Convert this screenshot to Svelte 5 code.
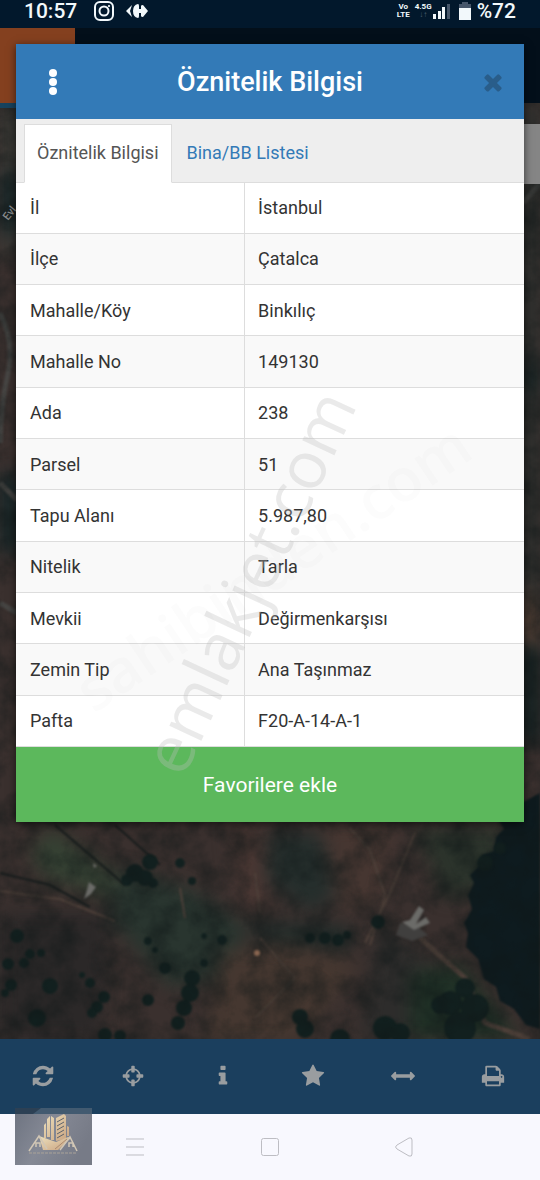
<script lang="ts">
	const title = 'Öznitelik Bilgisi';
	const tabs = ['Öznitelik Bilgisi', 'Bina/BB Listesi'];
	let activeTab = $state(0);
	let open = $state(true);

	const rows = [
		['İl', 'İstanbul'],
		['İlçe', 'Çatalca'],
		['Mahalle/Köy', 'Binkılıç'],
		['Mahalle No', '149130'],
		['Ada', '238'],
		['Parsel', '51'],
		['Tapu Alanı', '5.987,80'],
		['Nitelik', 'Tarla'],
		['Mevkii', 'Değirmenkarşısı'],
		['Zemin Tip', 'Ana Taşınmaz'],
		['Pafta', 'F20-A-14-A-1']
	];

	const tools = [
		{
			label: 'Yenile',
			path: 'M1639 1056q0 5-1 7-64 268-268 434.5t-478 166.5q-146 0-282.5-55t-243.5-157l-129 129q-19 19-45 19t-45-19-19-45v-448q0-26 19-45t45-19h448q26 0 45 19t19 45-19 45l-137 137q71 66 161 102t187 36q134 0 250-65t186-179q11-17 53-117 8-23 30-23h192q13 0 22.5 9.5t9.5 22.5zm25-800v448q0 26-19 45t-45 19h-448q-26 0-45-19t-19-45 19-45l138-138q-148-137-349-137-134 0-250 65t-186 179q-11 17-53 117-8 23-30 23h-199q-13 0-22.5-9.5t-9.5-22.5v-7q65-268 270-434.5t480-166.5q146 0 284 55.5t245 156.5l130-129q19-19 45-19t45 19 19 45z'
		},
		{
			label: 'Konum',
			path: 'M1325 1024h-109q-26 0-45-19t-19-45v-128q0-26 19-45t45-19h109q-32-108-112.5-188.5t-188.5-112.5v109q0 26-19 45t-45 19h-128q-26 0-45-19t-19-45v-109q-108 32-188.5 112.5t-112.5 188.5h109q26 0 45 19t19 45v128q0 26-19 45t-45 19h-109q32 108 112.5 188.5t188.5 112.5v-109q0-26 19-45t45-19h128q26 0 45 19t19 45v109q108-32 188.5-112.5t112.5-188.5zm339-192v128q0 26-19 45t-45 19h-143q-37 161-154.5 278.5t-278.5 154.5v143q0 26-19 45t-45 19h-128q-26 0-45-19t-19-45v-143q-161-37-278.5-154.5t-154.5-278.5h-143q-26 0-45-19t-19-45v-128q0-26 19-45t45-19h143q37-161 154.5-278.5t278.5-154.5v-143q0-26 19-45t45-19h128q26 0 45 19t19 45v143q161 37 278.5 154.5t154.5 278.5h143q26 0 45 19t19 45z'
		},
		{
			label: 'Bilgi',
			path: 'M1216 1344v128q0 26-19 45t-45 19h-512q-26 0-45-19t-19-45v-128q0-26 19-45t45-19h64v-384h-64q-26 0-45-19t-19-45v-128q0-26 19-45t45-19h384q26 0 45 19t19 45v576h64q26 0 45 19t19 45zm-128-1152v192q0 26-19 45t-45 19h-256q-26 0-45-19t-19-45v-192q0-26 19-45t45-19h256q26 0 45 19t19 45z'
		},
		{
			label: 'Favoriler',
			path: 'M1728 647q0 22-26 48l-363 354 86 500q1 7 1 20 0 21-10.5 35.5t-30.5 14.5q-19 0-40-12l-449-236-449 236q-22 12-40 12-21 0-31.5-14.5t-10.5-35.5q0-6 2-20l86-500-364-354q-25-27-25-48 0-37 56-46l502-73 225-455q19-41 49-41t49 41l225 455 502 73q56 9 56 46z'
		},
		{
			label: 'Ölç',
			path: 'M1792 896q0 26-19 45l-256 256q-19 19-45 19t-45-19-19-45v-128h-1024v128q0 26-19 45t-45 19-45-19l-256-256q-19-19-19-45t19-45l256-256q19-19 45-19t45 19 19 45v128h1024v-128q0-26 19-45t45-19 45 19l256 256q19 19 19 45z'
		},
		{
			label: 'Yazdır',
			path: 'M448 1536h896v-256h-896v256zm0-640h896v-384h-160q-40 0-68-28t-28-68v-160h-640v640zm1152 64q0-26-19-45t-45-19-45 19-19 45 19 45 45 19 45-19 19-45zm128 0v416q0 13-9.5 22.5t-22.5 9.5h-224v160q0 40-28 68t-68 28h-960q-40 0-68-28t-28-68v-160h-224q-13 0-22.5-9.5t-9.5-22.5v-416q0-79 56.5-135.5t135.5-56.5h64v-544q0-40 28-68t68-28h672q40 0 88 20t76 48l152 152q28 28 48 76t20 88v256h64q79 0 135.5 56.5t56.5 135.5z'
		}
	];

	// tree crowns on the map: x, y, radius
	const trees = [
		[17, 833, 7], [50, 883, 8], [37, 915, 9], [148, 897, 6], [30, 851, 5], [24, 860, 5], [8, 861, 6], [11, 882, 6],
		[5, 890, 4], [41, 850, 4], [90, 880, 5], [82, 872, 3], [104, 894, 6], [97, 904, 6], [92, 910, 5], [148, 838, 4],
		[155, 847, 3], [204, 833, 3], [222, 837, 5], [204, 860, 4], [165, 865, 6], [180, 760, 5], [192, 778, 4],
		[150, 759, 8], [135, 770, 9], [145, 775, 8], [153, 780, 5], [127, 777, 6], [192, 875, 8], [190, 890, 9],
		[184, 905, 8], [178, 920, 7], [300, 914, 8], [305, 926, 9], [105, 932, 7], [120, 933, 6], [378, 819, 7],
		[310, 835, 5], [325, 835, 6], [338, 837, 6], [347, 832, 4], [385, 925, 12], [400, 930, 10], [340, 936, 10],
		[465, 885, 10], [450, 900, 12], [440, 902, 9], [475, 905, 14], [460, 925, 16], [500, 745, 6], [485, 760, 8]
	];
</script>

<div class="screen">
	<header class="status">
		<span class="clock">10:57</span>
		<svg class="status-app" viewBox="0 0 20 20" aria-hidden="true">
			<rect x="1" y="1" width="18" height="18" rx="5" />
			<circle cx="10" cy="10" r="4.5" />
			<circle class="solid" cx="15" cy="5" r="0.7" />
		</svg>
		<svg class="carrefour" viewBox="0 0 22 16" aria-hidden="true">
			<path d="M6 2 0 8l6 6-2-6zM12 1Q7 2 7 8t5 7q1 0 1-2v-3h2v3q0 1 2 1l5-6-5-6q-2 0-2 1v3h-2V3q0-2-1-2z" />
		</svg>
		<span class="spacer"></span>
		<span class="volte"><span>Vo</span><span>LTE</span></span>
		<span class="network">4.5G<span class="arrows">↓↑</span></span>
		<svg class="signal" viewBox="0 0 17 16" aria-hidden="true">
			<path d="M0 11h3v5H0zM5 8h3v8H5zM9 4h3v12H9z" />
			<path class="dim" d="M14 1h3v15h-3z" />
		</svg>
		<svg class="battery" viewBox="0 0 12 18" aria-hidden="true">
			<path class="dim" d="M3 0h6v2h3v4H0V2h3z" />
			<path d="M0 6h12v12H0z" />
		</svg>
		<span class="percent">%72</span>
	</header>

	<div class="app">
		<div class="page">
			<div class="app-bar"><div class="brand"></div></div>
			<div class="map">
				<svg viewBox="0 0 540 936" preserveAspectRatio="xMidYMax slice" aria-hidden="true">
					<defs>
						<filter id="soft" x="-20%" y="-20%" width="140%" height="140%" color-interpolation-filters="sRGB"><feGaussianBlur stdDeviation="9" /></filter>
						<filter id="edge" color-interpolation-filters="sRGB"><feGaussianBlur stdDeviation="1" /></filter>
						<filter id="ground" x="0" y="0" width="100%" height="100%" color-interpolation-filters="sRGB">
							<feTurbulence type="fractalNoise" baseFrequency="0.04" numOctaves="5" seed="8" />
							<feColorMatrix values="0 0 0 0 0.06  0 0 0 0 0.09  0 0 0 0 0.09  1.8 0 0 0 -0.6" />
						</filter>
					</defs>
					<rect width="540" height="936" fill="#3a302e" />
					<g filter="url(#soft)">
						<path d="M0 0h20v150H0z" fill="#3b3b37" />
						<path d="M0 70h20v60H0zM0 370h20v80H0z" fill="#16282a" />
						<path d="M520 0h20v640h-20z" fill="#2c2f2d" />
						<path d="M520 260h20v30h-20zM520 520h20v120h-20z" fill="#122122" />
						<path d="M520 480l20 25v35h-20z" fill="#594337" />
						<path d="M50 725l65 45 10 30-80-25-15-25z" fill="#354133" />
						<path d="M0 810h110l-10 126H0z" fill="#2b2828" />
						<path d="M120 765l70 20 60 40-30 50-50 10-60-70z" fill="#29352f" />
						<path d="M270 730h50l20 60-30 20-45-35z" fill="#252e2c" />
						<path d="M320 720h80l-20 80-40 10z" fill="#463631" />
						<path d="M220 850l70-10 70 20-60 80h-95z" fill="#453730" />
						<path d="M230 720h30l10 90h-30z" fill="#4a3733" />
						<path d="M380 820l80 60-10 56h-90z" fill="#2d2c2b" />
						<path d="M415 725h90v60l-60 10z" fill="#2b332b" />
						<path d="M410 870l50-10 60 76H410z" fill="#213227" />
						<path d="M250 820l100 5v20l-90-10z" fill="#1c2a28" />
					</g>
					<path filter="url(#edge)" fill="#0e1b1f" d="M540 690v236l-14-4-12-16-14-8-4-14-12-8-6-20-12-12 2-14-4-10 8-14-4-14 6-12-4-8 10-10 2-10 12-4 2-14 8-8-6-10 8-8z" />
					<g class="roads" filter="url(#edge)">
						<path d="M0 788l60 8 55 22" />
						<path d="M0 770l50 12 40 22M55 722l70 60M115 722l45 40" class="dark" />
						<path d="M350 725l20 22 15 45-15 50M415 730l-25 60-25 50" />
						<path d="M255 770l5 40M180 785l5 30M260 835l35 40-40 40" />
						<path class="wide" d="M420 835l45 40 20 45 45 16" />
						<path class="wide grey" d="M0 210q15 30 8 60T0 340M0 380l17 17M0 500l17 10" />
						<path class="wide grey" d="M523 100l17-20" />
					</g>
					<g fill="#12201f" filter="url(#edge)">
						{#each trees as [x, y, r]}
							<circle cx={x} cy={y} {r} />
						{/each}
					</g>
					<rect width="540" height="936" filter="url(#ground)" opacity="0.55" />
					<g fill="#6b6b68" filter="url(#edge)">
						<path d="M400 820l18 4 10 8-16 6-16-6z" fill="#403f3e" />
						<path d="M89 779l7 5-5 7-7 5 3-9zM93 760l4 3-3 2zM419 803l5 4-8 14 10-7 4 6-16 7-12-8 8-2z" />
						<circle cx="257" cy="850" r="3" fill="#8a6650" />
					</g>
					<rect x="520" y="21" width="20" height="60" fill="#858585" />
					<rect width="16" height="5" fill="#17435e" />
					<text class="place" x="8" y="118" transform="rotate(-52 8 118)">Evl</text>
				</svg>
			</div>
			<nav class="toolbar" aria-label="Harita araçları">
				{#each tools as tool}
					<button aria-label={tool.label}>
						<svg viewBox="0 0 1792 1792" aria-hidden="true"><path d={tool.path} /></svg>
					</button>
				{/each}
			</nav>
		</div>

		{#if open}
			<section class="modal" aria-label={title}>
				<div class="modal-head">
					<button class="menu" aria-label="Menü">
						<svg viewBox="0 0 8 26" aria-hidden="true">
							<circle cx="4" cy="4" r="4" /><circle cx="4" cy="13" r="4" /><circle cx="4" cy="22" r="4" />
						</svg>
					</button>
					<h1>{title}</h1>
					<button class="close" aria-label="Kapat" onclick={() => (open = false)}>
						<svg viewBox="0 0 1792 1792" aria-hidden="true">
							<path d="M1490 1322q0 40-28 68l-136 136q-28 28-68 28t-68-28l-294-294-294 294q-28 28-68 28t-68-28l-136-136q-28-28-28-68t28-68l294-294-294-294q-28-28-28-68t28-68l136-136q28-28 68-28t68 28l294 294 294-294q28-28 68-28t68 28l136 136q28 28 28 68t-28 68l-294 294 294 294q28 28 28 68z" />
						</svg>
					</button>
				</div>
				<div class="tabs" role="tablist">
					{#each tabs as tab, index}
						<button role="tab" aria-selected={index == activeTab} class={index == activeTab ? 'tab tab-active' : 'tab'} onclick={() => (activeTab = index)}>{tab}</button>
					{/each}
				</div>
				<table>
					<tbody>
						{#each rows as [name, value]}
							<tr>
								<th scope="row">{name}</th>
								<td>{value}</td>
							</tr>
						{/each}
					</tbody>
				</table>
				<button class="favorite">Favorilere ekle</button>
				<span class="watermark">emlakjet.com</span>
				<span class="watermark watermark-faint">sahibinden.com</span>
			</section>
		{/if}
	</div>

	<footer class="system-nav">
		<svg class="agency" viewBox="0 0 77 57" aria-hidden="true">
			<defs>
				<linearGradient id="plate" x1="0" y1="0" x2="1" y2="0.4">
					<stop offset="0" stop-color="#6d7380" />
					<stop offset="0.5" stop-color="#858995" />
					<stop offset="1" stop-color="#777b87" />
				</linearGradient>
				<linearGradient id="gold" x1="0" y1="0" x2="1" y2="1">
					<stop offset="0" stop-color="#ece0bd" />
					<stop offset="1" stop-color="#c9a27f" />
				</linearGradient>
			</defs>
			<path fill="url(#plate)" d="M0 0h77v57H0z" />
			<path fill="#425a70" d="M0 0h77v6H0z" />
			<path fill="#2c4054" d="M0 0h26l-8 6H0z" />
			<path fill="url(#gold)" d="M29 17l2-2v15h-2zM32 11l3-3v21h-3zM36 8l3 2v22h-3zM41 10l8-4 2 2v23l-10 2zM52 18l2 1v9h-2z" />
			<path stroke="#5f636b" d="M42 14l7-4M42 18l7-4M42 22l7-4M42 26l7-4M42 30l7-4" />
			<path fill="url(#gold)" d="M24 28l17 6 12-5 3 1-13 12H28z" />
			<path fill="none" stroke="#aa8a70" d="M40 41l12-10" />
			<path fill="none" stroke="#d1c6b5" stroke-width="1.5" d="M14 43l10-15 8 13M45 42l10-13 7 14M21 39v-4h4v4M54 39v-4h4v4" />
			<path stroke="#a9a298" stroke-dasharray="3 1" d="M14 45h48" />
		</svg>
		<button aria-label="Son uygulamalar"><svg viewBox="0 0 20 20" aria-hidden="true"><path d="M1 2h18M1 10h18M1 18h18" /></svg></button>
		<button aria-label="Ana ekran"><svg viewBox="0 0 20 20" aria-hidden="true"><rect x="1.5" y="1.5" width="17" height="17" rx="2" /></svg></button>
		<button aria-label="Geri"><svg viewBox="0 0 20 20" aria-hidden="true"><path d="M14 1Q17 0 17 3v14q0 3-3 2L2 12q-3-2 0-4z" /></svg></button>
	</footer>
</div>

<style>
	:global(body) {
		margin: 0;
		background: #f8f8fe;
	}

	.screen {
		display: flex;
		flex-direction: column;
		min-height: 100vh;
		font-family: Roboto, 'Noto Sans', sans-serif;
		color: #333;
	}

	button {
		border: 0;
		padding: 0;
		background: none;
		font: inherit;
		color: inherit;
		cursor: pointer;
	}

	svg {
		display: block;
	}

	.status {
		display: flex;
		align-items: center;
		height: 28px;
		box-sizing: border-box;
		padding: 0 24px 6px;
		background: #02182c;
		color: #f2f8fb;
		fill: currentColor;
	}

	.clock,
	.percent {
		font-size: 21px;
		line-height: 22px;
		font-weight: 500;
	}

	.status-app {
		width: 20px;
		height: 20px;
		margin-left: 17px;
		fill: none;
		stroke: currentColor;
		stroke-width: 2;
	}

	.status-app .solid {
		fill: currentColor;
		stroke-width: 1;
	}

	.carrefour {
		width: 22px;
		height: 16px;
		margin-left: 12px;
	}

	.spacer {
		flex: 1;
	}

	.volte,
	.network {
		display: flex;
		flex-direction: column;
		align-items: center;
		font-size: 8px;
		line-height: 8px;
		font-weight: 700;
	}

	.network {
		margin-left: 5px;
	}

	.arrows {
		color: #4e6272;
	}

	.signal {
		width: 17px;
		height: 16px;
		margin-left: 1px;
	}

	.battery {
		width: 12px;
		height: 18px;
		margin: 0 6px 0 9px;
	}

	.dim {
		fill: #46566a;
	}

	.app {
		flex: 1;
		display: grid;
	}

	.page,
	.modal {
		grid-area: 1 / 1;
	}

	.page {
		display: flex;
		flex-direction: column;
	}

	.app-bar {
		display: flex;
		height: 75px;
		background: #030f1a;
	}

	.brand {
		width: 75px;
		background: #84401f;
	}

	.map {
		flex: 1;
		display: grid;
		min-height: 0;
		background: #352d2c;
		overflow: hidden;
	}

	.map svg {
		width: 100%;
		height: 100%;
	}

	.roads {
		fill: none;
		stroke: #4e4039;
		stroke-width: 2;
	}

	.roads .dark {
		stroke: #171c1c;
	}

	.roads .wide {
		stroke-width: 5;
	}

	.roads .grey {
		stroke: #464543;
	}

	.place {
		font-size: 11px;
		font-weight: 500;
		fill: #8b8b8b;
	}

	.toolbar {
		display: grid;
		grid-template-columns: repeat(6, 1fr);
		height: 75px;
		background: #1b3f5e;
	}

	.toolbar button {
		display: grid;
		place-items: center;
		padding: 0 4px 2px 0;
	}

	.toolbar svg {
		width: 24px;
		height: 24px;
		fill: #999da0;
	}

	.modal {
		position: relative;
		align-self: start;
		margin: 16px 16px 0;
		background: white;
		box-shadow: 0 2px 8px rgba(0, 0, 0, 0.6);
		z-index: 1;
	}

	.modal-head {
		display: grid;
		grid-template-columns: 74px 1fr 74px;
		align-items: center;
		height: 75px;
		background: #337ab7;
		color: white;
	}

	.menu svg {
		width: 8px;
		height: 26px;
		margin: auto;
		fill: white;
	}

	.close {
		justify-self: end;
		width: 62px;
	}

	.close svg {
		width: 26px;
		height: 26px;
		margin: auto;
		fill: #295d8a;
	}

	h1 {
		margin: 0;
		font-size: 27px;
		line-height: 36px;
		font-weight: 500;
		text-align: center;
	}

	.tabs {
		display: flex;
		gap: 2px;
		padding: 5px 8px 0;
		background: #eee;
		border-bottom: 1px solid #ddd;
	}

	.tab {
		height: 59px;
		margin-bottom: -1px;
		padding: 0 12px 2px;
		border: 1px solid transparent;
		font-size: 18px;
		line-height: 24px;
		color: #337ab7;
	}

	.tab-active {
		background: white;
		border-color: #ddd;
		border-bottom-color: white;
		color: #555;
	}

	table {
		width: 100%;
		height: 564px;
		border-collapse: collapse;
		font-size: 18px;
		line-height: 24px;
	}

	th,
	td {
		padding: 1px 13px 0;
		border-bottom: 1px solid #ddd;
		font-weight: 400;
		text-align: left;
	}

	th {
		width: 45%;
		box-sizing: border-box;
		padding-left: 14px;
		border-right: 1px solid #ddd;
	}

	tr:nth-child(even) {
		background: #f9f9f9;
	}

	.favorite {
		display: block;
		width: 100%;
		height: 75px;
		background: #5cb85c;
		color: white;
		font-size: 21px;
		line-height: 28px;
	}

	/* lies across the table and the green button */
	.watermark {
		position: absolute;
		left: 231px;
		top: 537px;
		font-family: 'Open Sans', sans-serif;
		font-size: 66px;
		line-height: 72px;
		color: rgba(190, 190, 190, 0.32);
		transform: translate(-50%, -50%) rotate(-65deg);
		white-space: nowrap;
		pointer-events: none;
	}

	.watermark-faint {
		left: 256px;
		top: 522px;
		font-size: 60px;
		font-weight: 600;
		color: rgba(120, 120, 120, 0.02);
		transform: translate(-50%, -50%) rotate(-34deg);
	}

	.system-nav {
		position: relative;
		display: grid;
		grid-template-columns: repeat(3, 1fr);
		height: 66px;
		padding: 0 68px;
		background: #f8f8fe;
	}

	.system-nav button {
		display: grid;
		place-items: center;
	}

	.system-nav button svg {
		width: 20px;
		height: 20px;
		fill: none;
		stroke: #bdbdc3;
		stroke-width: 1;
	}

	.agency {
		position: absolute;
		left: 15px;
		top: -6px;
		width: 77px;
		height: 57px;
	}
</style>
